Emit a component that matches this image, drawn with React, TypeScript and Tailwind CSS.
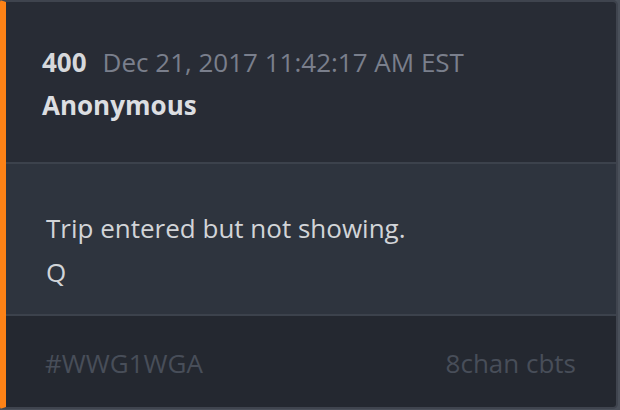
const Post = () => {
  return (
    <div className="w-[618px] overflow-hidden rounded-r-[5px] rounded-l-[2px] border-t-2 border-r-2 border-b-2 border-l-[6px] border-t-[#3f444e] border-r-[#3f444e] border-b-[#3f444e] border-l-[#fd8216]">
      {/* Header */}
      <div className="bg-[#282c35] pl-[36px] pt-[39px] pb-[35px] border-b-2 border-[#3c424c]">
        <div className="flex items-baseline leading-[43px] text-[26px]">
          <span className="font-bold text-[#d6d8db]">400</span>
          <span className="ml-[16px] text-[#7a7f8c]">Dec 21, 2017 11:42:17 AM EST</span>
        </div>
        <div className="leading-[43px] text-[26px] font-bold text-[#dcdee1]">Anonymous</div>
      </div>

      {/* Body */}
      <div className="bg-[#2e343e] pl-[40px] pt-[42px] pb-[20px] border-b-2 border-[#3c424c] text-[26px] leading-[44px] text-[#d2d4d8]">
        <p>Trip entered but not showing.</p>
        <p>Q</p>
      </div>

      {/* Footer */}
      <div className="bg-[#242830] flex justify-between pl-[39px] pr-[40px] pt-[25px] pb-[22px] text-[26px] leading-[44px] text-[#484e59]">
        <span>#WWG1WGA</span>
        <span>8chan cbts</span>
      </div>
    </div>
  );
};

export default function App() {
  return (
    <div
      className="w-[620px] h-[410px] bg-[#4a505a]"
      style={{ fontFamily: '"Open Sans", "Noto Sans", sans-serif' }}
    >
      <Post />
    </div>
  );
}
